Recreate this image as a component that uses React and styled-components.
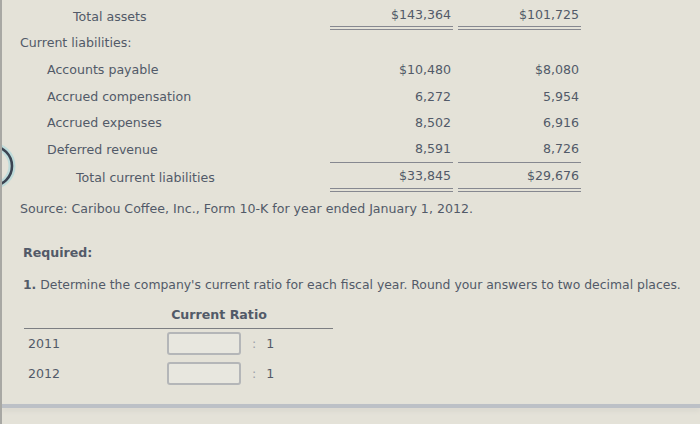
import React from "react";
import styled, { createGlobalStyle } from "styled-components";

const GlobalStyle = createGlobalStyle`
  html, body {
    margin: 0;
    padding: 0;
    background: #e4e2d8;
  }
  body {
    font-family: "DejaVu Sans", Verdana, sans-serif;
    color: #525a68;
  }
`;

const rows = [
  { label: "Accounts payable", a: "$10,480", b: "$8,080" },
  { label: "Accrued compensation", a: "6,272", b: "5,954" },
  { label: "Accrued expenses", a: "8,502", b: "6,916" },
  { label: "Deferred revenue", a: "8,591", b: "8,726", rule: "single" },
];

const App = () => {
  return (
    <>
      <GlobalStyle />
      <Page>
        <Ring viewBox="0 0 30 60" width="30" height="60">
          <circle cx="-8" cy="26" r="20" fill="none" stroke="#9fd6dc" strokeWidth="7" opacity="0.55" />
          <circle cx="-8" cy="26" r="20" fill="none" stroke="#3b4452" strokeWidth="2.6" />
        </Ring>
        <Sheet>
          <Row>
            <Label indent={53}>Total assets</Label>
            <Amount rule="double">$143,364</Amount>
            <Amount rule="double">$101,725</Amount>
          </Row>
          <Row>
            <Label indent={0}>Current liabilities:</Label>
            <Amount />
            <Amount />
          </Row>
          {rows.map((r) => (
            <Row key={r.label}>
              <Label indent={27}>{r.label}</Label>
              <Amount rule={r.rule}>{r.a}</Amount>
              <Amount rule={r.rule}>{r.b}</Amount>
            </Row>
          ))}
          <Row total>
            <Label indent={56}>Total current liabilities</Label>
            <Amount rule="double">$33,845</Amount>
            <Amount rule="double">$29,676</Amount>
          </Row>
        </Sheet>

        <Source>Source: Caribou Coffee, Inc., Form 10-K for year ended January 1, 2012.</Source>

        <Required>Required:</Required>
        <Question>
          <b>1.</b> Determine the company's current ratio for each fiscal year. Round your answers to two decimal places.
        </Question>

        <RatioTable>
          <RatioHead>
            <span />
            <HeadCell>Current Ratio</HeadCell>
          </RatioHead>
          {["2011", "2012"].map((y) => (
            <RatioRow key={y}>
              <Year>{y}</Year>
              <AnswerBox type="text" aria-label={`Current ratio ${y}`} />
              <Suffix>
                <span>:</span> 1
              </Suffix>
            </RatioRow>
          ))}
        </RatioTable>

        <BottomBar />
      </Page>
    </>
  );
};

const Page = styled.div`
  position: relative;
  width: 700px;
  height: 424px;
  overflow: hidden;
  box-sizing: border-box;
  padding: 3px 0 0 18px;
  border-left: 2px solid #a8a8a4;
  font-size: 12.6px;
`;

const Ring = styled.svg`
  position: absolute;
  left: -2px;
  top: 140px;
`;

const Sheet = styled.div`
  display: flex;
  flex-direction: column;
  width: 561px;
`;

const Row = styled.div`
  display: grid;
  grid-template-columns: 305px 123px 123px;
  column-gap: 5px;
  height: ${(p) => (p.total ? "29px" : "26.6px")};
  align-items: stretch;
`;

const Label = styled.div`
  display: flex;
  align-items: center;
  padding-left: ${(p) => p.indent}px;
  white-space: nowrap;
`;

const Amount = styled.div`
  display: flex;
  align-items: center;
  justify-content: flex-end;
  padding-right: 2px;
  box-sizing: border-box;
  border-bottom: ${(p) =>
    p.rule === "double"
      ? "4px double #868890"
      : p.rule === "single"
      ? "1px solid #868890"
      : "none"};
`;

const Source = styled.div`
  margin-top: 9px;
  line-height: 16px;
`;

const Required = styled.div`
  margin: 28px 0 0 3px;
  font-weight: bold;
  line-height: 16px;
`;

const Question = styled.div`
  margin: 16px 0 0 3px;
  line-height: 16px;
  font-size: 12.4px;
  white-space: nowrap;
  b {
    font-weight: bold;
  }
`;

const RatioTable = styled.div`
  margin: 14px 0 0 4px;
  width: 309px;
`;

const RatioHead = styled.div`
  display: grid;
  grid-template-columns: 143px 104px;
  height: 21px;
  border-bottom: 1px solid #7c7e82;
`;

const HeadCell = styled.div`
  font-weight: bold;
  text-align: center;
  line-height: 16px;
  white-space: nowrap;
`;

const RatioRow = styled.div`
  display: grid;
  grid-template-columns: 143px 74px auto;
  align-items: center;
  height: 30px;
  &:first-of-type {
    margin-top: 1px;
  }
`;

const Year = styled.div`
  padding-left: 4px;
`;

const AnswerBox = styled.input`
  box-sizing: border-box;
  width: 74px;
  height: 23px;
  margin: 0;
  border: 2px solid #b4b6b8;
  border-radius: 3px;
  background: #e8e7df;
  outline: none;
`;

const Suffix = styled.div`
  padding-left: 11px;
  span {
    color: #9aa0a8;
    margin-right: 6px;
  }
`;

const BottomBar = styled.div`
  position: absolute;
  left: 0;
  right: 0;
  top: 404px;
  height: 4px;
  background: #bcc0c6;
  box-shadow: 0 3px 4px #d8d6ce;
`;

export default App;
